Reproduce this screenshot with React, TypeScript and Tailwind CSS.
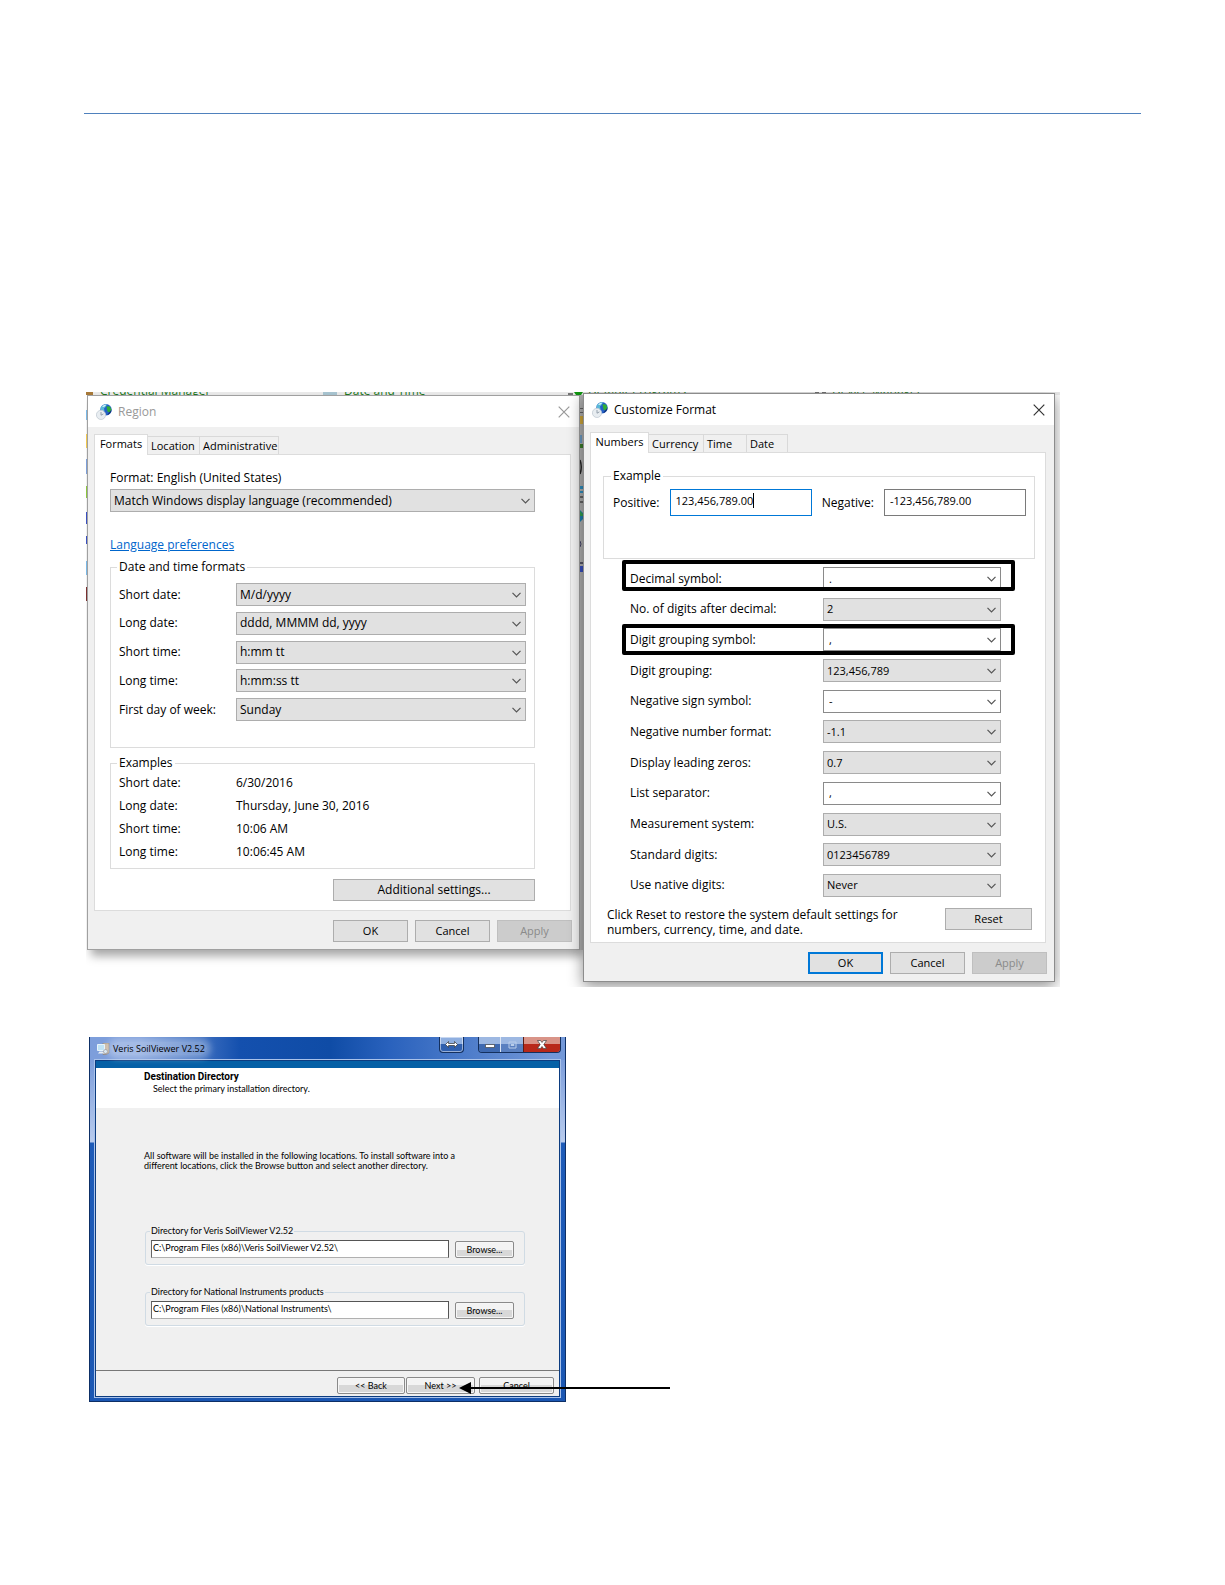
import { ReactNode, useId } from "react";

type Field = {
  label: string;
  value: string;
  editable?: boolean;
  marker?: string;
};

const dateFormats: Field[] = [
  { label: "Short date:", value: "M/d/yyyy" },
  { label: "Long date:", value: "dddd, MMMM dd, yyyy" },
  { label: "Short time:", value: "h:mm tt" },
  { label: "Long time:", value: "h:mm:ss tt" },
  { label: "First day of week:", value: "Sunday" },
];

const examples = [
  ["Short date:", "6/30/2016"],
  ["Long date:", "Thursday, June 30, 2016"],
  ["Short time:", "10:06 AM"],
  ["Long time:", "10:06:45 AM"],
];

const numberFormats: Field[] = [
  { label: "Decimal symbol:", value: ".", editable: true, marker: "-top-[7px] -bottom-px" },
  { label: "No. of digits after decimal:", value: "2" },
  { label: "Digit grouping symbol:", value: ",", editable: true, marker: "-top-1 -bottom-1" },
  { label: "Digit grouping:", value: "123,456,789" },
  { label: "Negative sign symbol:", value: "-", editable: true },
  { label: "Negative number format:", value: "-1.1" },
  { label: "Display leading zeros:", value: "0.7" },
  { label: "List separator:", value: ",", editable: true },
  { label: "Measurement system:", value: "U.S." },
  { label: "Standard digits:", value: "0123456789" },
  { label: "Use native digits:", value: "Never" },
];

const regionTabs = [
  { name: "Formats", width: "w-[54px]" },
  { name: "Location", width: "w-[52px]" },
  { name: "Administrative", width: "w-[79px]" },
];

const customizeTabs = [
  { name: "Numbers", width: "w-[59px]" },
  { name: "Currency", width: "w-[55px]" },
  { name: "Time", width: "w-[43px]" },
  { name: "Date", width: "w-[41px]" },
];

function GlobeIcon() {
  return (
    <svg width="16" height="16" viewBox="0 0 16 16">
      <circle cx="10" cy="5.8" r="5.7" fill="#2460c6" />
      <path d="M4.500 4C6 1.200 9 0 11 .4L9.500 3 8 4.500 8.500 7 5.500 8z" fill="#58b8d8" />
      <path d="M10.500 2.200l3.500.3 1.300 3-1.300 3.500-2.500-1.500-.5-2.500z" fill="#2fae35" />
      <path d="M6 2.500C7.500.8 9.500.5 10.500.8L8 3z" fill="#d4f4f6" />
      <path d="M11 11.200c2.500-.7 4.400-2.700 4.600-5.400l-2.400 2.400z" fill="#10307c" />
      <circle cx="5" cy="10.900" r="4.600" fill="#e8edf1" stroke="#c3ccd4" strokeWidth=".8" />
      <path d="M5 8v3.200l2.400-1.300" fill="none" stroke="#8c99a6" strokeWidth=".9" />
    </svg>
  );
}

function Chevron() {
  return (
    <svg className="pointer-events-none absolute top-[9px] right-[5px]" width="9" height="6" viewBox="0 0 9 6">
      <path d="M.5.8l4 4 4-4" fill="none" stroke="#555" strokeWidth="1.200" />
    </svg>
  );
}

function Combo({ id, value, editable }: { id?: string; value: string; editable?: boolean }) {
  return (
    <div className="relative">
      <select
        id={id}
        aria-label={id ? undefined : value}
        className={
          editable
            ? "block h-[23px] w-full appearance-none border border-[#8a8a8a] bg-white px-[5px] leading-4"
            : "block h-[23px] w-full appearance-none border border-[#adadad] bg-[#e1e1e1] px-[3px] leading-4"
        }
      >
        <option>{value}</option>
      </select>
      <Chevron />
    </div>
  );
}

function FieldRow({ field, comboClass }: { field: Field; comboClass: string }) {
  const id = useId();
  return (
    <div className="relative flex items-center justify-between">
      <label htmlFor={id}>{field.label}</label>
      <div className={comboClass}>
        <Combo id={id} value={field.value} editable={field.editable} />
      </div>
      {field.marker && (
        <div className={`pointer-events-none absolute -right-[14px] -left-2 rounded-xs border-4 border-black ${field.marker}`} />
      )}
    </div>
  );
}

function Tabs({ tabs }: { tabs: { name: string; width: string }[] }) {
  return (
    <div role="tablist" className="flex h-5 items-end text-[11px]">
      {tabs.map((tab, i) => (
        <button
          key={tab.name}
          role="tab"
          aria-selected={i === 0}
          className={`border border-b-0 leading-4 whitespace-nowrap ${tab.width} ${
            i === 0
              ? "relative -mb-px h-[21px] border-[#dcdcdc] bg-white pb-[3px]"
              : "h-[18px] border-l-0 border-[#d9d9d9] bg-[#f0f0f0] pl-[3px] text-left"
          }`}
        >
          {tab.name}
        </button>
      ))}
    </div>
  );
}

function Button({ children, className }: { children: ReactNode; className?: string }) {
  return (
    <button className={`h-[22px] border border-[#adadad] bg-[#e1e1e1] leading-4 ${className ?? ""}`}>
      {children}
    </button>
  );
}

function DialogButtons({ primary }: { primary?: boolean }) {
  return (
    <div className="flex justify-end gap-[7px] pt-[9px] pr-[7px] pb-[7px] text-[11px]">
      <button
        className={
          primary
            ? "h-[22px] w-[75px] border-2 border-[#0078d7] bg-[#e1e1e1] leading-4"
            : "h-[22px] w-[75px] border border-[#adadad] bg-[#e1e1e1] leading-4"
        }
      >
        OK
      </button>
      <Button className="w-[75px]">Cancel</Button>
      <button disabled className="h-[22px] w-[75px] border border-[#bfbfbf] bg-[#cccccc] leading-4 text-[#8a8a8a]">
        Apply
      </button>
    </div>
  );
}

function TitleBar({ title, inactive }: { title: string; inactive?: boolean }) {
  return (
    <div className="flex h-[31px] items-center bg-white pr-[9px] pl-2">
      <GlobeIcon />
      <h2 className={inactive ? "flex-1 pl-[6px] text-[#999]" : "flex-1 pl-[6px] text-black"}>{title}</h2>
      <button aria-label="Close" className={inactive ? "text-[#999]" : "text-[#333]"}>
        <svg width="12" height="12" viewBox="0 0 12 12">
          <path d="M.7.7l10.600 10.600M11.300.7L.7 11.300" stroke="currentColor" strokeWidth="1.200" />
        </svg>
      </button>
    </div>
  );
}

function RegionWindow() {
  return (
    <section className="relative mt-[3px] w-[493px] shrink-0 border border-[#a0a0a0] bg-[#f0f0f0] shadow-[4px_6px_9px_rgba(0,0,0,0.35)]">
      <TitleBar title="Region" inactive />
      <div className="pt-[7px] pr-2 pl-[6px]">
        <Tabs tabs={regionTabs} />
        <div className="border border-[#dcdcdc] bg-white pt-[15px] pr-[35px] pb-[9px] pl-[15px]">
          <div className="mb-[3px]">Format: English (United States)</div>
          <Combo value="Match Windows display language (recommended)" />
          <a href="#language" className="mt-[25px] block text-[#0066cc] underline">
            Language preferences
          </a>
          <fieldset className="mt-[6px] h-[189px] border border-[#dcdcdc] px-[6px]">
            <legend className="px-[2px]">Date and time formats</legend>
            <div className="flex h-[146px] flex-col justify-between pt-2 pr-[2px] pl-[2px]">
              {dateFormats.map((f) => (
                <FieldRow key={f.label} field={f} comboClass="w-[290px]" />
              ))}
            </div>
          </fieldset>
          <fieldset className="mt-[7px] h-[114px] border border-[#dcdcdc] px-[6px]">
            <legend className="px-[2px]">Examples</legend>
            <dl className="pl-[2px]">
              {examples.map(([k, v]) => (
                <div key={k} className="flex h-[23px] items-center">
                  <dt className="w-[117px]">{k}</dt>
                  <dd>{v}</dd>
                </div>
              ))}
            </dl>
          </fieldset>
          <div className="mt-[10px] flex justify-end">
            <Button className="w-[202px]">Additional settings...</Button>
          </div>
        </div>
      </div>
      <DialogButtons />
    </section>
  );
}

function CustomizeWindow() {
  return (
    <section className="relative mt-px w-[472px] shrink-0 border border-[#8c8c8c] bg-[#f0f0f0] shadow-[0_4px_14px_rgba(0,0,0,0.45)]">
      <TitleBar title="Customize Format" />
      <div className="pt-[7px] pr-2 pl-[6px]">
        <Tabs tabs={customizeTabs} />
        <div className="border border-[#dcdcdc] bg-white pt-[15px] pr-[10px] pb-[5px] pl-3">
          <fieldset className="h-[91px] border border-[#dcdcdc] px-[7px]">
            <legend className="px-[2px]">Example</legend>
            <div className="flex items-center justify-between pt-[5px] pr-px pl-[2px]">
              <label htmlFor="positive">Positive:</label>
              <div className="relative">
                <input
                  id="positive"
                  defaultValue="123,456,789.00"
                  className="block h-[27px] w-[142px] border border-[#0078d7] bg-white px-[5px] pb-[5px] text-[11px]"
                />
                <span className="absolute top-1 left-[83px] h-[15px] w-px bg-black" />
              </div>
              <label htmlFor="negative">Negative:</label>
              <input
                id="negative"
                defaultValue="-123,456,789.00"
                className="block h-[27px] w-[142px] border border-[#7a7a7a] bg-white px-[5px] pb-[5px] text-[11px]"
              />
            </div>
          </fieldset>
          <div className="mt-2 flex h-[330px] flex-col justify-between pr-[34px] pl-[27px]">
            {numberFormats.map((f) => (
              <FieldRow key={f.label} field={f} comboClass="w-[178px] text-[11px]" />
            ))}
          </div>
          <div className="mt-[10px] flex items-start justify-between pr-[3px] pl-1">
            <p className="w-[300px] leading-[15px]">
              Click Reset to restore the system default settings for numbers, currency, time, and date.
            </p>
            <Button className="mt-px w-[87px] text-[11px]">Reset</Button>
          </div>
        </div>
      </div>
      <DialogButtons primary />
    </section>
  );
}

// The control panel that lies behind the two dialogs, seen only at their edges
function ControlPanelBackdrop() {
  return (
    <>
      <div className="absolute inset-x-0 top-0 flex h-[3px] items-end overflow-hidden bg-[#ececec] leading-[8px] text-[#1e7b1e]">
        {["Credential Manager", "Date and Time", "Default Programs", "Device Manager"].map((name) => (
          <span key={name} className="w-[244px] shrink-0 pl-[14px]">
            {name}
          </span>
        ))}
      </div>
      <svg className="absolute top-0 left-0" width="974" height="3">
        <path d="M0 0h7v3H0z" fill="#a87a3a" />
        <path d="M237 0h14v3h-14z" fill="#a9c6d2" />
        <path d="M482 1h5v2h-5z" fill="#777" />
        <path d="M488 0h9l-2 3h-5z" fill="#129a12" />
        <path d="M729 0h4v2h-4zM736 0h4v2h-4z" fill="#777" />
      </svg>
      <svg className="absolute top-0 left-0 z-10" width="1" height="240">
        <path d="M0 18h1v10H0zM0 169h1v14H0z" fill="#7ab8e6" />
        <path d="M0 42h1v14H0z" fill="#f0c850" />
        <path d="M0 67h1v15H0z" fill="#7c9ed8" />
        <path d="M0 94h1v12H0z" fill="#8cc63f" />
        <path d="M0 120h1v12H0zM0 144h1v8H0z" fill="#3a4fc0" />
        <path d="M0 195h1v14H0z" fill="#7a3030" />
      </svg>
    </>
  );
}

function BackdropGap() {
  return (
    <svg className="relative mt-[3px] shrink-0" width="3" height="555">
      <path d="M0 0h3v555H0z" fill="#b2b2b2" />
      <path d="M0 13h3v1H0zM0 17h3v1H0z" fill="#666" />
      <path d="M0 21h3v8H0z" fill="#d0a83c" />
      <path d="M0 40h2v8H0z" fill="#6e9cc4" />
      <path d="M0 49h3v4H0z" fill="#3c7d2c" />
      <path d="M0 65q2.500 7 0 14" fill="none" stroke="#222" strokeWidth="1.500" />
      <path d="M0 91h3v3H0zM0 96h3v2H0z" fill="#2f8fc0" />
      <path d="M0 101h3v2H0zM0 106h3v2H0z" fill="#666" />
      <path d="M0 115l3 3v6l-3 3z" fill="#1f7fb0" />
      <path d="M0 116l3 3v2H0z" fill="#32a050" />
      <path d="M0 146q2 3 0 6" fill="none" stroke="#446" />
      <path d="M0 167h3v2H0z" fill="#556" />
      <path d="M0 171h3v6H0z" fill="#3850c0" />
    </svg>
  );
}

function InstallGroup({ label, path }: { label: string; path: string }) {
  const id = useId();
  return (
    <fieldset className="h-[39px] rounded-[3px] border border-[#d0dbe4] px-1 shadow-[0_1px_0_#fff]">
      <legend className="px-px leading-[10px]">
        <label htmlFor={id}>{label}</label>
      </legend>
      <div className="flex gap-[6px] pt-1 pl-px">
        <input
          id={id}
          defaultValue={path}
          className="h-[18px] w-[298px] border border-[#b0b0b0] border-t-[#555] border-r-[#555] border-l-[#666] bg-white px-px pb-[3px]"
        />
        <InstallButton className="mt-px w-[59px]">Browse...</InstallButton>
      </div>
    </fieldset>
  );
}

function InstallButton({ children, className }: { children: ReactNode; className: string }) {
  return (
    <button
      className={`h-[17px] rounded-xs border border-[#8a8a8a] bg-linear-to-b from-[#f3f3f3] from-50% to-[#d8d8d8] to-50% leading-[10px] shadow-[inset_0_0_0_1px_#f6f6f6] ${className}`}
    >
      {children}
    </button>
  );
}

function InstallerTitle() {
  return (
    <div className="flex h-[23px] items-start pr-1 pl-[7px]">
      <svg className="mt-[6px]" width="13" height="12" viewBox="0 0 13 12">
        <path d="M6 0h6v10l-3 1.500H6z" fill="#c9b9a6" stroke="#85786c" strokeWidth=".6" />
        <path d="M.5 1.500h7v6h-7z" fill="#bfe3f5" stroke="#e8f4fa" />
        <path d="M2.500 8.500h4L8 10.500H1z" fill="#e8eef2" />
        <circle cx="8.500" cy="8.500" r="2" fill="#d9e8f0" stroke="#778" strokeWidth=".5" />
      </svg>
      <h2 className="mt-1 ml-px flex-1 font-['Open_Sans',sans-serif] text-[9px] leading-4 text-black">
        <span className="rounded-full bg-white/30 px-[2px] shadow-[0_0_6px_4px_rgba(255,255,255,0.3)]">
          Veris SoilViewer V2.52
        </span>
      </h2>
      <button
        aria-label="Resize"
        className="mr-[14px] flex h-4 w-[25px] items-center justify-center rounded-b border border-t-0 border-[#14305e] bg-linear-to-b from-[#8fafe0] from-45% to-[#2f5fae] to-50% shadow-[inset_0_0_0_1px_rgba(255,255,255,0.5)]"
      >
        <svg width="13" height="7" viewBox="0 0 13 7">
          <path d="M.5 3.500l3-3v2h6v-2l3 3-3 3v-2h-6v2z" fill="#fff" stroke="#333" strokeWidth=".7" />
        </svg>
      </button>
      <div className="flex h-4 overflow-hidden rounded-b border border-t-0 border-[#14305e]">
        <button
          aria-label="Minimize"
          className="flex w-[22px] items-end justify-center border-r border-[#dce6f4] bg-linear-to-b from-[#9db8e2] from-45% to-[#3e69b0] to-50% pb-1"
        >
          <svg width="10" height="4" viewBox="0 0 10 4">
            <path d="M.5.5h9v3h-9z" fill="#fff" stroke="#444" strokeWidth=".7" />
          </svg>
        </button>
        <button
          aria-label="Maximize"
          className="flex w-[22px] items-center justify-center bg-linear-to-b from-[#9db8e2] from-45% to-[#5a80c0] to-50%"
        >
          <svg width="9" height="8" viewBox="0 0 9 8">
            <path d="M1 1h7v6H1zM3 3.500h3v1H3z" fill="none" stroke="#b9cdea" />
          </svg>
        </button>
        <button
          aria-label="Close"
          className="flex w-[37px] items-center justify-center border-l border-[#5c1c14] bg-linear-to-b from-[#d99488] from-45% to-[#b8291a] to-50%"
        >
          <svg width="10" height="9" viewBox="0 0 10 9">
            <path d="M.5.5h3L5 2.500 6.500.5h3L6.800 4.500l2.700 4h-3L5 6.500l-1.500 2h-3l2.700-4z" fill="#fff" stroke="#444" strokeWidth=".7" />
          </svg>
        </button>
      </div>
    </div>
  );
}

function InstallerWindow() {
  return (
    <section className="relative w-[477px] border border-t-0 border-[#0d2f66] bg-[linear-gradient(90deg,#7d9edb_0px,#7d9edb_50px,#1450ae_150px,#0f4ca6_240px,#2a62bd_300px,#7398d8_460px)] font-[Lato,sans-serif] text-[9px] leading-[10px] text-black">
      <InstallerTitle />
      <div className="bg-[linear-gradient(180deg,#7d9edb_0px,#b9ccee_82px,#1e5bb8_83px,#1b57b3_100%)] px-[5px] pb-1">
        <div className="border border-[#0c3c80] bg-[#f0f0f0] shadow-[0_0_0_1px_#a9c2ea]">
          <div className="h-[7px] bg-[#0560a6]" />
          <div className="h-10 bg-white px-12 pt-1">
            <h3 className="font-[Roboto,sans-serif] text-[10px] font-bold">Destination Directory</h3>
            <p className="mt-[2px] pl-[9px]">Select the primary installation directory.</p>
          </div>
          <div className="pt-[43px] pr-[34px] pb-[44px] pl-12">
            <p className="w-[340px]">
              All software will be installed in the following locations. To install software into a
              <br />
              different locations, click the Browse button and select another directory.
            </p>
            <div className="mt-[55px] space-y-[22px] pl-px">
              <InstallGroup label="Directory for Veris SoilViewer V2.52" path="C:\Program Files (x86)\Veris SoilViewer V2.52\" />
              <InstallGroup label="Directory for National Instruments products" path="C:\Program Files (x86)\National Instruments\" />
            </div>
          </div>
          <div className="flex justify-end border-t border-[#777] pt-[6px] pr-[5px] pb-[2px]">
            <InstallButton className="w-[68px]">&lt;&lt; Back</InstallButton>
            <InstallButton className="ml-px w-[69px]">Next &gt;&gt;</InstallButton>
            <InstallButton className="ml-1 w-[75px]">Cancel</InstallButton>
          </div>
        </div>
      </div>
      {/* arrow pointing at the Next button */}
      <svg className="pointer-events-none absolute bottom-[7px] left-[369px]" width="212" height="12" viewBox="0 0 212 12">
        <path d="M10 6h201" stroke="#000" strokeWidth="2" />
        <path d="M0 6l12-6v12z" />
      </svg>
    </section>
  );
}

export default function App() {
  return (
    <main className="min-h-screen overflow-hidden bg-white px-[84px] pt-[113px] pb-16 font-['Open_Sans',sans-serif] text-[12px] leading-4 text-black">
      <hr className="border-t border-[#4f81bd]" />
      <div className="relative mt-[278px] ml-[2px] flex h-[595px] max-w-[974px] items-start overflow-hidden pl-px">
        <ControlPanelBackdrop />
        <RegionWindow />
        <BackdropGap />
        <CustomizeWindow />
      </div>
      <div className="mt-[50px] ml-[5px]">
        <InstallerWindow />
      </div>
    </main>
  );
}
